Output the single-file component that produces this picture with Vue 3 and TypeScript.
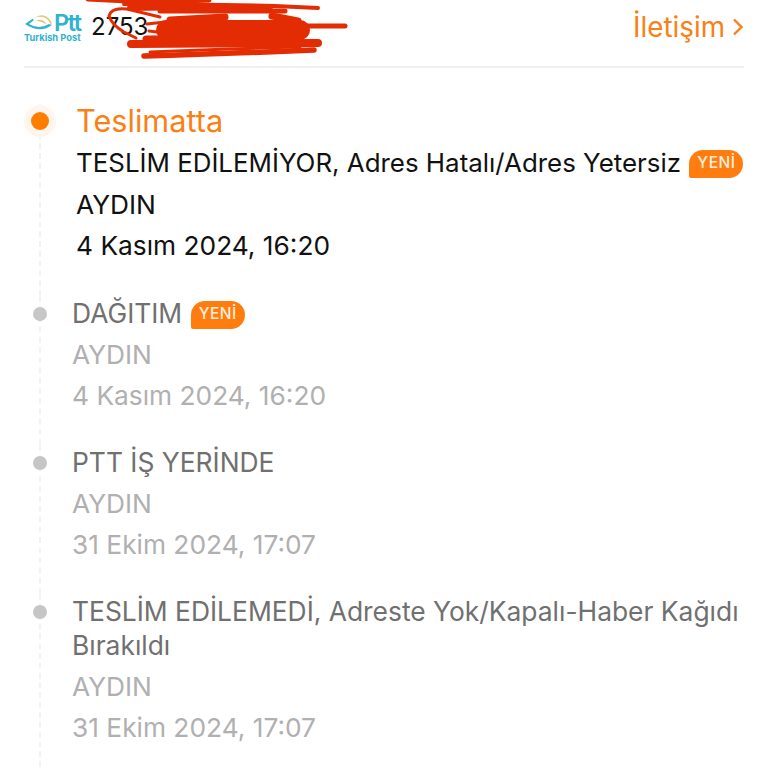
<template>
  <div class="tracking">
    <header class="carrier">
      <div class="carrier__brand">
        <svg class="carrier__logo" width="30" height="22" viewBox="0 0 30 22">
          <path d="M1 13 L9 7.500 L9.500 9.500 L5 13 Q15 19 25 13 L28 14 Q16 23 1 13Z" fill="#2fb3cf" />
          <path d="M11 6.500 Q19 2 24.500 7 Q27.500 10 28 13.500 L26.500 13 Q24 7 18.500 6 Q14 5.500 11 6.500Z" fill="#e3c67c" />
          <path d="M12 9.500 Q18 7.500 21 11 L22.500 13.500 Q18 10.500 12 9.500Z" fill="#e3c67c" />
        </svg>
        <span class="carrier__ptt">Ptt</span>
        <span class="carrier__sub">Turkish Post</span>
      </div>
      <span class="carrier__number">2753</span>
      <a class="carrier__contact">
        İletişim
        <svg width="12" height="18" viewBox="0 0 12 18"><path d="M2 1.500 L9.500 9 L2 16.500" fill="none" stroke="currentColor" stroke-width="2.400" /></svg>
      </a>
      <!-- hand-drawn cover over the tracking number -->
      <svg class="carrier__scribble" width="768" height="68" viewBox="0 0 768 68">
        <g fill="none" stroke="#e42c04" stroke-linecap="round" stroke-linejoin="round">
          <path d="M88 -1 Q150 3 209 0" stroke-width="5" />
          <path d="M124 4 Q200 4 275 6 L318 8" stroke-width="4" />
          <path d="M130 8 Q210 7 270 7" stroke-width="6" />
          <path d="M160 11 L285 11" stroke-width="5" />
          <path d="M160 17 L127 9 Q111 7 109 16 Q112 25 124 32 L136 38" stroke-width="3" />
          <path d="M170 20 L225 17 M272 16 L298 21" stroke-width="7" />
          <path d="M166 30 L300 30" stroke-width="20" />
          <path d="M300 26 L345 26" stroke-width="5" />
          <path d="M146 39 L300 38" stroke-width="7" />
          <path d="M147 24 L165 22 M149 31 L165 33" stroke-width="3" />
          <path d="M131 44 L318 43" stroke-width="8" />
          <path d="M144 56 Q220 54 314 50" stroke-width="5.500" />
          <path d="M150 52 Q220 49 300 47" stroke-width="3" />
        </g>
      </svg>
    </header>

    <ol class="steps">
      <li v-for="(step, i) in steps" :key="i" class="step" :class="{ 'step--current': step.current }">
        <span class="step__dot"></span>
        <div class="step__body">
          <div v-if="step.status" class="step__status">{{ step.status }}</div>
          <div class="step__title">
            {{ step.title }}
            <span v-if="step.isNew" class="badge">YENİ</span>
          </div>
          <div class="step__text">{{ step.city }}</div>
          <div class="step__text step__text--date">{{ step.date }}</div>
        </div>
      </li>
    </ol>
  </div>
</template>

<script setup lang="ts">
type Step = {
  status?: string
  title: string
  city: string
  date: string
  isNew?: boolean
  current?: boolean
}

const steps: Step[] = [
  {
    status: 'Teslimatta',
    title: 'TESLİM EDİLEMİYOR, Adres Hatalı/Adres Yetersiz',
    city: 'AYDIN',
    date: '4 Kasım 2024, 16:20',
    isNew: true,
    current: true,
  },
  { title: 'DAĞITIM', city: 'AYDIN', date: '4 Kasım 2024, 16:20', isNew: true },
  { title: 'PTT İŞ YERİNDE', city: 'AYDIN', date: '31 Ekim 2024, 17:07' },
  {
    title: 'TESLİM EDİLEMEDİ, Adreste Yok/Kapalı-Haber Kağıdı Bırakıldı',
    city: 'AYDIN',
    date: '31 Ekim 2024, 17:07',
  },
]
</script>

<style scoped>
.tracking {
  width: 768px;
  height: 768px;
  overflow: hidden;
  background: #fff;
  font-family: Inter, "Liberation Sans", sans-serif;
  color: #111;
}

.carrier {
  position: relative;
  display: flex;
  align-items: center;
  height: 66px;
  margin: 0 24px;
  border-bottom: 2px solid #f0f0f0;
}

.carrier__brand {
  position: relative;
  width: 58px;
  height: 34px;
  margin-top: -10px;
  flex: none;
}

.carrier__logo {
  position: absolute;
  left: 0;
  top: 0;
}

.carrier__ptt {
  position: absolute;
  left: 30px;
  top: 2px;
  font-size: 23.500px;
  line-height: 20px;
  font-weight: 600;
  letter-spacing: -1.500px;
  color: #2fb3cf;
}

.carrier__sub {
  position: absolute;
  left: 0;
  top: 22px;
  font-size: 9.300px;
  line-height: 10px;
  font-weight: 700;
  white-space: nowrap;
  color: #2fb3cf;
}

.carrier__number {
  margin-left: 9px;
  margin-top: -13px;
  font-size: 24px;
  color: #111;
}

.carrier__contact {
  display: flex;
  align-items: center;
  gap: 7px;
  margin-left: auto;
  margin-top: -13px;
  font-size: 27.800px;
  color: #fa7f14;
}

.carrier__scribble {
  position: absolute;
  left: -24px;
  top: 0;
}

.steps {
  list-style: none;
  margin: 0;
  padding: 36px 16px 0 0;
}

.step {
  position: relative;
  padding-left: 72px;
  padding-bottom: 32px;
}

/* dashed rail running behind the dots */
.step::before {
  content: "";
  position: absolute;
  left: 39px;
  top: 0;
  bottom: 0;
  border-left: 2px dashed #f3f3f3;
}

.step__dot {
  position: absolute;
  left: 33px;
  top: 11px;
  width: 14px;
  height: 14px;
  border-radius: 50%;
  background: #c6c6c6;
}

.step--current {
  padding-left: 76px;
  padding-bottom: 33px;
}

.step--current .step__dot {
  left: 31px;
  top: 8px;
  width: 18px;
  height: 18px;
  background: #ff7d00;
  box-shadow: 0 0 0 7px #fff5ec;
}

.step__status {
  margin-bottom: 8px;
  font-size: 30.700px;
  line-height: 34px;
  color: #fa7f14;
}

.step__title {
  font-size: 26.400px;
  line-height: 34px;
  color: #707070;
}

.step--current .step__title {
  font-size: 25.900px;
  color: #111;
}

.step--current .step__text {
  color: #111;
}

.step__text {
  margin-top: 8px;
  font-size: 26.300px;
  line-height: 34px;
  color: #b0b0b0;
}

.step__text--date {
  margin-top: 7px;
}

.badge {
  display: inline-block;
  margin-left: 1px;
  padding: 0 8px;
  height: 28px;
  line-height: 26px;
  vertical-align: 4px;
  font-size: 15.500px;
  font-weight: 500;
  letter-spacing: 0.5px;
  color: #ffeedd;
  background: #ff7d0f;
  border-radius: 14px 14px 14px 2px;
}
</style>
